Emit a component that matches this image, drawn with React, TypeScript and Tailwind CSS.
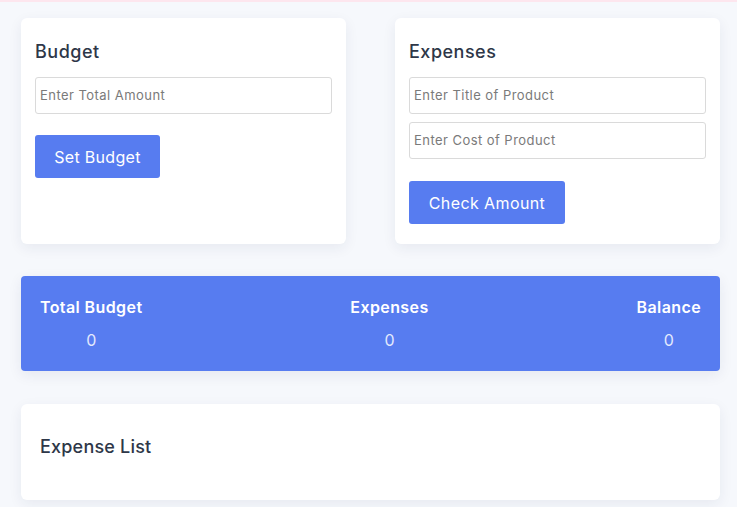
import React from "react";

export default function App() {
  const font = { fontFamily: "Inter, 'Open Sans', sans-serif" };
  const inputCls =
    "w-full h-[37px] border border-[#dadada] rounded-[3px] px-[4px] pb-[1px] text-[13px] tracking-[0.45px] text-[#444] placeholder:text-[#7a7a7a] outline-none";
  return (
    <div style={font} className="min-h-screen w-full bg-[#f6f8fc] border-t-2 border-[#fde6ee]">
      <div className="pl-[21px] pr-[17px] pt-[16px]">
        <div className="grid grid-cols-2 gap-[49px]">
          <div className="bg-white rounded-md shadow-[0_4px_14px_rgba(30,40,90,0.07)] px-[14px] pt-[20px] pb-[20px]">
            <h3 className="text-[18px] leading-[28px] font-medium text-[#2e3748] tracking-[0.5px]">Budget</h3>
            <input placeholder="Enter Total Amount" className={"mt-[11px] " + inputCls} />
            <button className="mt-[21px] w-[125px] h-[43px] rounded-[3px] bg-[#577cf0] text-white text-[16px] tracking-[0.3px]">
              Set Budget
            </button>
          </div>
          <div className="bg-white rounded-md shadow-[0_4px_14px_rgba(30,40,90,0.07)] px-[14px] pt-[20px] pb-[20px]">
            <h3 className="text-[18px] leading-[28px] font-medium text-[#2e3748] tracking-[0.5px]">Expenses</h3>
            <input placeholder="Enter Title of Product" className={"mt-[11px] " + inputCls} />
            <input placeholder="Enter Cost of Product" className={"mt-[8px] " + inputCls} />
            <button className="mt-[22px] w-[156px] h-[43px] rounded-[3px] bg-[#577cf0] text-white text-[16px] tracking-[0.4px]">
              Check Amount
            </button>
          </div>
        </div>

        <div className="mt-[32px] bg-[#577cf0] rounded-[4px] shadow-[0_4px_14px_rgba(30,40,90,0.08)] px-[19px] pt-[19px] pb-[19px] flex justify-between text-white">
          <div className="flex flex-col items-center">
            <span className="text-[16px] leading-[24px] font-semibold tracking-[0.4px]">Total Budget</span>
            <span className="mt-[9px] text-[16px] leading-[24px] text-[#e3e9fd]">0</span>
          </div>
          <div className="flex flex-col items-center">
            <span className="text-[16px] leading-[24px] font-semibold tracking-[0.4px]">Expenses</span>
            <span className="mt-[9px] text-[16px] leading-[24px] text-[#e3e9fd]">0</span>
          </div>
          <div className="flex flex-col items-center">
            <span className="text-[16px] leading-[24px] font-semibold tracking-[0.4px]">Balance</span>
            <span className="mt-[9px] text-[16px] leading-[24px] text-[#e3e9fd]">0</span>
          </div>
        </div>

        <div className="mt-[33px] bg-white rounded-md shadow-[0_4px_14px_rgba(30,40,90,0.07)] px-[19px] pt-[29px] h-[96px]">
          <h3 className="text-[18px] leading-[28px] font-medium text-[#2e3748] tracking-[0.2px]">Expense List</h3>
        </div>
      </div>
    </div>
  );
}
